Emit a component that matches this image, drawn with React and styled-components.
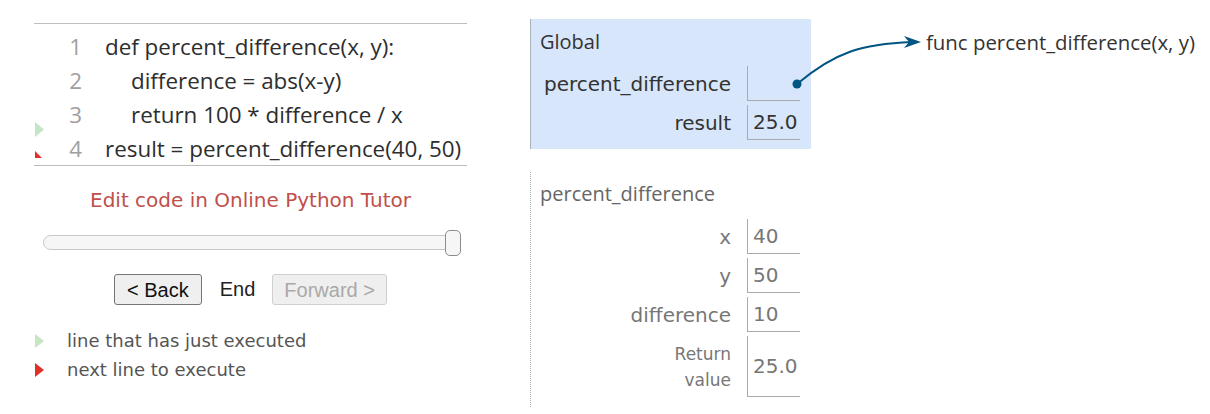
import React from "react";
import styled, { createGlobalStyle } from "styled-components";

const GlobalStyle = createGlobalStyle`
  body {
    margin: 0;
    background: #fff;
    font-family: "DejaVu Sans", Verdana, sans-serif;
  }
`;

const Page = styled.div`
  position: relative;
  display: flex;
  align-items: flex-start;
  padding-left: 34px;
  width: 1210px;
  height: 414px;
  overflow: hidden;
  box-sizing: border-box;
`;

const LeftPanel = styled.div`
  width: 433px;
  display: flex;
  flex-direction: column;
`;

const CodeTable = styled.div`
  margin-top: 23px;
  padding-top: 5px;
  border-top: 1px solid #bdbdbd;
  border-bottom: 1px solid #bdbdbd;
  font-family: "Open Sans", "Noto Sans", sans-serif;
  font-size: 22.4px;
  color: #2e2e2e;
`;

const CodeRow = styled.div`
  display: flex;
  align-items: center;
  height: 34px;
  white-space: pre;
`;

const Gutter = styled.div`
  position: relative;
  align-self: stretch;
  width: 26px;
`;

const Marker = styled.svg`
  position: absolute;
  left: 1px;
  top: ${(p) => p.$top}px;
`;

const LineNo = styled.div`
  width: 22px;
  text-align: right;
  color: #a0a0a0;
`;

const CodeText = styled.div`
  padding-left: ${(p) => 23 + p.$indent}px;
`;

const EditLink = styled.a`
  display: block;
  margin-top: 22px;
  text-align: center;
  font-size: 20px;
  line-height: 24px;
  color: #c0504a;
  text-decoration: none;
`;

const Slider = styled.div`
  position: relative;
  margin: 23px 6px 0 9px;
  height: 15px;
  box-sizing: border-box;
  border: 1px solid #c8c8c8;
  border-radius: 8px;
  background: #f6f6f6;
`;

const Handle = styled.div`
  position: absolute;
  right: -1px;
  top: -6px;
  width: 16px;
  height: 26px;
  box-sizing: border-box;
  border: 1px solid #8c8c8c;
  border-radius: 5px;
  background: #f6f6f6;
`;

const Controls = styled.div`
  display: flex;
  justify-content: center;
  align-items: center;
  margin-top: 24px;
  font-family: "Liberation Sans", Arial, sans-serif;
  font-size: 20px;
`;

const NavButton = styled.button`
  height: 31px;
  padding: 0 ${(p) => (p.disabled ? 11 : 12)}px;
  font-family: inherit;
  font-size: 20px;
  line-height: 1;
  border-radius: 3px;
  background: #efefef;
  border: 1px solid ${(p) => (p.disabled ? "#cfcfcf" : "#767676")};
  color: ${(p) => (p.disabled ? "#a9a9a9" : "#111")};
`;

const StepLabel = styled.span`
  margin: 0 17px 0 18px;
  color: #222;
`;

const Legend = styled.div`
  margin-top: 21px;
  display: flex;
  flex-direction: column;
`;

const LegendRow = styled.div`
  display: flex;
  align-items: center;
  height: 29px;
  font-size: 18px;
  color: #555;
`;

const LegendIcon = styled.svg`
  margin-left: 1px;
  margin-right: 22px;
`;

const RightPanel = styled.div`
  display: flex;
  align-items: flex-start;
  margin-left: 63px;
`;

const Stack = styled.div`
  width: 281px;
  display: flex;
  flex-direction: column;
`;

const Frame = styled.div`
  margin-top: ${(p) => (p.$active ? 19 : 23)}px;
  padding: ${(p) => (p.$active ? "11px 11px 9px 9px" : "10px 11px 10px 9px")};
  background: ${(p) => (p.$active ? "#d7e6fa" : "#fff")};
  border-left: 1px ${(p) => (p.$active ? "solid" : "dotted")} #a6b3b6;
  color: ${(p) => (p.$active ? "#333" : "#777")};
`;

const FrameHeader = styled.div`
  font-family: "Open Sans", "Noto Sans", sans-serif;
  font-size: 20px;
  line-height: 24px;
  color: ${(p) => (p.$active ? "#333" : "#666")};
`;

const VarGrid = styled.div`
  margin-top: ${(p) => (p.$active ? 12 : 13)}px;
  display: grid;
  grid-template-columns: 1fr 53px;
  row-gap: 4px;
`;

const VarName = styled.div`
  display: flex;
  align-items: center;
  justify-content: flex-end;
  padding-right: 16px;
  text-align: right;
  font-size: ${(p) => (p.$small ? 17 : 20)}px;
  line-height: ${(p) => (p.$small ? 26 : 24)}px;
`;

const VarValue = styled.div`
  display: flex;
  align-items: center;
  height: ${(p) => p.$h || 35}px;
  padding-left: 5px;
  box-sizing: border-box;
  border-left: 1px solid #aaa;
  border-bottom: 1px solid #aaa;
  font-size: 20px;
`;

const Heap = styled.div`
  margin-left: 115px;
  margin-top: 29px;
  font-family: "Open Sans", "Noto Sans", sans-serif;
  font-size: 20.4px;
  line-height: 26px;
  color: #333;
  white-space: nowrap;
`;

const Connector = styled.svg`
  position: absolute;
  left: 0;
  top: 0;
  pointer-events: none;
`;

const code = [
  { n: 1, indent: 0, text: "def percent_difference(x, y):" },
  { n: 2, indent: 26, text: "difference = abs(x-y)" },
  { n: 3, indent: 26, text: "return 100 * difference / x" },
  { n: 4, indent: 0, text: "result = percent_difference(40, 50)" },
];

const globals = [
  { name: "percent_difference", value: "" },
  { name: "result", value: "25.0" },
];

const locals = [
  { name: "x", value: "40" },
  { name: "y", value: "50" },
  { name: "difference", value: "10" },
];

function GreenArrow({ top }) {
  return (
    <Marker $top={top} width="10" height="16" viewBox="0 0 10 16">
      <polygon points="0,0 9,7.5 0,15" fill="#c5e5c5" />
    </Marker>
  );
}

function RedArrow({ top }) {
  return (
    <Marker $top={top} width="8" height="8" viewBox="0 0 8 8">
      <polygon points="0,0 7,7 0,7" fill="#e0302a" />
    </Marker>
  );
}

export default function App() {
  return (
    <>
      <GlobalStyle />
      <Page>
        <LeftPanel>
          <CodeTable>
            {code.map((line) => (
              <CodeRow key={line.n}>
                <Gutter>
                  {line.n === 3 && <GreenArrow top={25} />}
                  {line.n === 4 && <RedArrow top={20} />}
                </Gutter>
                <LineNo>{line.n}</LineNo>
                <CodeText $indent={line.indent}>{line.text}</CodeText>
              </CodeRow>
            ))}
          </CodeTable>
          <EditLink href="#">Edit code in Online Python Tutor</EditLink>
          <Slider>
            <Handle />
          </Slider>
          <Controls>
            <NavButton>&lt; Back</NavButton>
            <StepLabel>End</StepLabel>
            <NavButton disabled>Forward &gt;</NavButton>
          </Controls>
          <Legend>
            <LegendRow>
              <LegendIcon width="10" height="16" viewBox="0 0 10 16">
                <polygon points="0,1 9,8 0,15" fill="#c5e5c5" />
              </LegendIcon>
              line that has just executed
            </LegendRow>
            <LegendRow>
              <LegendIcon width="10" height="16" viewBox="0 0 10 16">
                <polygon points="0,1 9,8 0,15" fill="#e0302a" />
              </LegendIcon>
              next line to execute
            </LegendRow>
          </Legend>
        </LeftPanel>
        <RightPanel>
          <Stack>
            <Frame $active>
              <FrameHeader $active>Global</FrameHeader>
              <VarGrid $active>
                {globals.map((v) => (
                  <React.Fragment key={v.name}>
                    <VarName>{v.name}</VarName>
                    <VarValue>{v.value}</VarValue>
                  </React.Fragment>
                ))}
              </VarGrid>
            </Frame>
            <Frame>
              <FrameHeader>percent_difference</FrameHeader>
              <VarGrid>
                {locals.map((v) => (
                  <React.Fragment key={v.name}>
                    <VarName>{v.name}</VarName>
                    <VarValue>{v.value}</VarValue>
                  </React.Fragment>
                ))}
                <VarName $small>
                  Return
                  <br />
                  value
                </VarName>
                <VarValue $h={61}>25.0</VarValue>
              </VarGrid>
            </Frame>
          </Stack>
          <Heap>func percent_difference(x, y)</Heap>
        </RightPanel>
        <Connector width="1210" height="414" viewBox="0 0 1210 414">
          <path
            d="M797,84 C835,52 862,44 912,42"
            fill="none"
            stroke="#005583"
            strokeWidth="2"
          />
          <polygon points="921,42 904,36 909,42 904,48" fill="#005583" />
          <circle cx="797" cy="84" r="4.5" fill="#005583" />
        </Connector>
      </Page>
    </>
  );
}
